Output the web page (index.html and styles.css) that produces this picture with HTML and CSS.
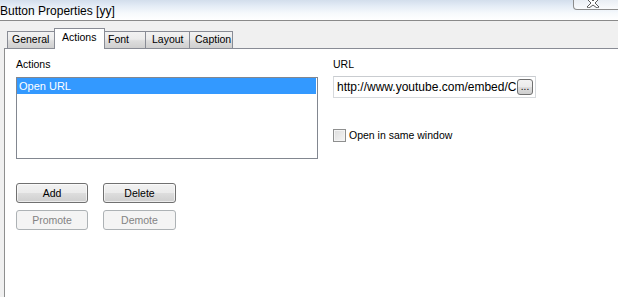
FILE: index.html
```html
<!DOCTYPE html>
<html>
<head>
<meta charset="utf-8">
<link rel="stylesheet" href="styles.css">
</head>
<body>
<div class="titlebar">
  <span class="title">Button Properties [yy]</span>
  <div class="close">
    <svg width="14" height="8" viewBox="0 0 14 8"><path d="M2 -3 L6 1 L10 -3 L12 -1 L8 3 L12 7 L10 8 L6 5 L2 8 L0 7 L4 3 L0 -1 Z" fill="#fff" stroke="#333" stroke-width="0.8"/></svg>
  </div>
</div>
<div class="tabstrip">
  <div class="tab tab-general">General</div>
  <div class="tab tab-active">Actions</div>
  <div class="tab tab-font">Font</div>
  <div class="tab tab-layout">Layout</div>
  <div class="tab tab-caption">Caption</div>
</div>
<div class="page">
  <div class="col-left">
    <div class="label">Actions</div>
    <div class="listbox">
      <div class="list-item selected">Open URL</div>
    </div>
    <div class="btn-grid">
      <button class="btn">Add</button>
      <button class="btn">Delete</button>
      <button class="btn disabled">Promote</button>
      <button class="btn disabled">Demote</button>
    </div>
  </div>
  <div class="col-right">
    <div class="label">URL</div>
    <div class="textbox">
      <span class="url-text">http://www.youtube.com/embed/C</span>
      <span class="browse">...</span>
    </div>
    <div class="check-row">
      <span class="checkbox"></span>
      <span class="check-label">Open in same window</span>
    </div>
  </div>
</div>
</body>
</html>
```
FILE: styles.css
```css
html, body {
  margin: 0;
  padding: 0;
}
body {
  width: 618px;
  height: 297px;
  overflow: hidden;
  background: #f0f0f0;
  display: flex;
  flex-direction: column;
  font-family: "Liberation Sans", Arial, sans-serif;
  font-size: 10.5px;
  color: #000;
}
.titlebar {
  height: 20px;
  flex: none;
  display: flex;
  align-items: flex-start;
  border-bottom: 1px solid #8a8a8a;
  background: linear-gradient(to bottom, #d3deec 0px, #e4ecf6 6px, #f6f9fc 13px, #ffffff 20px);
  overflow: hidden;
}
.title {
  font-size: 12px;
  line-height: 14px;
  padding-top: 4px;
  padding-left: 0;
}
.close {
  margin-left: auto;
  width: 40px;
  height: 9px;
  margin-right: -10px;
  border: 1px solid #8c8c8c;
  border-top: none;
  border-radius: 0 0 0 4px;
  background: linear-gradient(to bottom, #e9eef4, #fafbfd);
  display: flex;
  padding-left: 13px;
  box-sizing: content-box;
}
.close svg {
  display: block;
}
.tabstrip {
  height: 27px;
  flex: none;
  display: flex;
  align-items: flex-end;
  padding-left: 7px;
  box-sizing: border-box;
}
.tab {
  height: 17px;
  box-sizing: border-box;
  border-top: 1px solid #898c95;
  border-left: 1px solid #898c95;
  background: linear-gradient(to bottom, #f2f2f2 0%, #ebebeb 45%, #dddddd 55%, #cfcfcf 100%);
  display: flex;
  align-items: center;
  line-height: 13px;
  padding-bottom: 1px;
}
.tab-general {
  width: 47px;
  padding-left: 4px;
}
.tab-active {
  width: 51px;
  height: 21px;
  margin-bottom: -1px;
  padding-left: 7px;
  padding-bottom: 3px;
  background: #fff;
  border: 1px solid #898c95;
  border-bottom: none;
  position: relative;
  z-index: 1;
}
.tab-font {
  width: 40px;
  padding-left: 3px;
  border-left: none;
}
.tab-layout {
  width: 44px;
  padding-left: 6px;
}
.tab-caption {
  width: 44px;
  padding-left: 5px;
  border-right: 1px solid #898c95;
}
.page {
  flex: 1;
  margin-left: 4px;
  border-left: 1px solid #8e8f8f;
  border-top: 1px solid #898c95;
  background: #fff;
  display: flex;
  gap: 15px;
  padding: 9px 0 0 11px;
}
.label {
  line-height: 13px;
  height: 13px;
}
.col-left {
  width: 302px;
}
.listbox {
  margin-top: 6px;
  height: 82px;
  box-sizing: border-box;
  border: 1px solid #828790;
  padding-right: 1px;
}
.list-item {
  height: 16px;
  line-height: 16px;
  padding-left: 2px;
  font-size: 11px;
}
.list-item.selected {
  background: #3399ff;
  color: #fff;
}
.btn-grid {
  margin-top: 24px;
  display: grid;
  grid-template-columns: 72px 73px;
  column-gap: 15px;
  row-gap: 7px;
}
.btn {
  height: 20px;
  margin: 0;
  padding: 0;
  font-family: "Liberation Sans", Arial, sans-serif;
  font-size: 10.5px;
  color: #000;
  border: 1px solid #707070;
  border-radius: 3px;
  background: linear-gradient(to bottom, #f2f2f2 0%, #ebebeb 48%, #dddddd 52%, #cfcfcf 100%);
  box-shadow: inset 0 0 0 1px rgba(255,255,255,0.6);
}
.btn.disabled {
  color: #838383;
  border-color: #adb2b5;
  background: #f4f4f4;
  box-shadow: none;
}
.col-right {
  width: 203px;
}
.textbox {
  margin-top: 5px;
  height: 22px;
  box-sizing: border-box;
  border: 1px solid #d6d9dc;
  border-top-color: #c9ccd0;
  display: flex;
  align-items: center;
  padding-left: 3px;
  overflow: hidden;
}
.url-text {
  font-size: 12px;
  line-height: 14px;
  white-space: nowrap;
  overflow: hidden;
  width: 181px;
  flex: none;
}
.browse {
  width: 16px;
  height: 16px;
  box-sizing: border-box;
  border: 1px solid #707070;
  border-radius: 3px;
  background: linear-gradient(to bottom, #f2f2f2 0%, #ebebeb 48%, #dddddd 52%, #cfcfcf 100%);
  font-size: 10px;
  line-height: 14px;
  text-align: center;
  flex: none;
  margin-left: -1px;
}
.check-row {
  margin-top: 31px;
  display: flex;
  align-items: center;
  height: 13px;
}
.checkbox {
  width: 13px;
  height: 13px;
  box-sizing: border-box;
  border: 1px solid #8e8f8f;
  background: linear-gradient(135deg, #dcdcdc, #f6f6f6);
  box-shadow: inset 0 0 0 1px #f4f4f4;
  flex: none;
}
.check-label {
  margin-left: 3px;
  line-height: 13px;
}
```
